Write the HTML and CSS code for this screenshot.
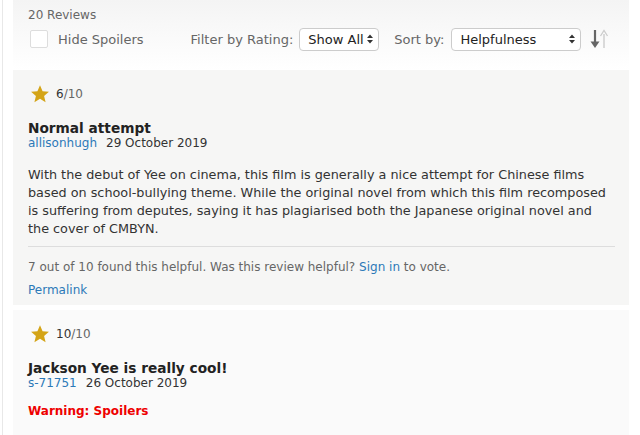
FILE: index.html
```html
<!DOCTYPE html>
<html lang="en">
<head>
    <meta charset="UTF-8">
    <meta name="viewport" content="width=device-width, initial-scale=1.0">
    <title>User Reviews</title>
    <link rel="stylesheet" href="styles.css">
</head>
<body>
    <div class="page">
        <div class="header">
            <div class="count">20 Reviews</div>
            <div class="controls">
                <label class="spoilers"><span class="checkbox"></span>Hide Spoilers</label>
                <span class="label filter-label">Filter by Rating:</span>
                <span class="select select-rating">Show All
                    <svg class="caret" width="6" height="10" viewBox="0 0 6 10"><path d="M0 4L3 0.5 6 4z M0 6L3 9.5 6 6z" fill="#333"/></svg>
                </span>
                <span class="label sort-label">Sort by:</span>
                <span class="select select-sort">Helpfulness
                    <svg class="caret" width="6" height="10" viewBox="0 0 6 10"><path d="M0 4L3 0.5 6 4z M0 6L3 9.5 6 6z" fill="#333"/></svg>
                </span>
                <svg class="sort-arrows" width="20" height="22" viewBox="0 0 20 22">
                    <path d="M6 2v14" stroke="#666" stroke-width="2.2"/>
                    <path d="M1.5 13.5L6 20l4.5-6.5z" fill="#666"/>
                    <path d="M15 20V6" stroke="#ccc" stroke-width="1.4"/>
                    <path d="M11.5 8L15 2.5 18.5 8" stroke="#ccc" stroke-width="1.3" fill="none"/>
                </svg>
            </div>
        </div>

        <div class="review review-odd">
            <div class="rating">
                <svg class="star" width="20" height="20" viewBox="0 0 24 24"><path d="M12 1.5l3.1 7.2 7.6.6-5.8 5 1.8 7.5L12 17.8l-6.7 4 1.8-7.5-5.8-5 7.6-.6z" fill="#d4a417"/></svg>
                <span class="score">6</span><span class="out-of">/10</span>
            </div>
            <div class="title">Normal attempt</div>
            <div class="meta"><a href="#" class="link">allisonhugh</a><span class="date">29 October 2019</span></div>
            <div class="content">
                <p class="text">With the debut of Yee on cinema, this film is generally a nice attempt for Chinese films based on school-bullying theme. While the original novel from which this film recomposed is suffering from deputes, saying it has plagiarised both the Japanese original novel and the cover of CMBYN.</p>
            </div>
            <div class="helpful">7 out of 10 found this helpful. Was this review helpful? <a href="#" class="link">Sign in</a> to vote.</div>
            <a href="#" class="link permalink">Permalink</a>
        </div>

        <div class="review review-even">
            <div class="rating">
                <svg class="star" width="20" height="20" viewBox="0 0 24 24"><path d="M12 1.5l3.1 7.2 7.6.6-5.8 5 1.8 7.5L12 17.8l-6.7 4 1.8-7.5-5.8-5 7.6-.6z" fill="#d4a417"/></svg>
                <span class="score">10</span><span class="out-of">/10</span>
            </div>
            <div class="title">Jackson Yee is really cool!</div>
            <div class="meta"><a href="#" class="link">s-71751</a><span class="date">26 October 2019</span></div>
            <div class="spoiler-warning">Warning: Spoilers</div>
        </div>
    </div>
</body>
</html>
```

FILE: styles.css
```css
* {
    box-sizing: border-box;
    margin: 0;
    padding: 0;
}

body {
    font-family: 'DejaVu Sans', Verdana, sans-serif;
    font-size: 12px;
    color: #333;
    background: #fff;
    overflow: hidden;
}

.page {
    width: 627px;
    margin-left: 2px;
    border-left: 1px solid #e8e8e8;
    padding-left: 10px;
    height: 435px;
}

.header {
    height: 70px;
    padding: 8px 0 0 15px;
    background: linear-gradient(#f4f4f4, #fff);
}

.count {
    color: #666;
    font-size: 12px;
    line-height: 14px;
}

.controls {
    display: flex;
    align-items: center;
    margin-top: 5px;
    height: 24px;
    color: #666;
    font-size: 13px;
}

.spoilers {
    display: flex;
    align-items: center;
}

.checkbox {
    width: 18px;
    height: 18px;
    border: 1px solid #ddd;
    border-radius: 2px;
    background: #fff;
    margin: 0 10px 0 2px;
}

.filter-label {
    margin-left: 47px;
}

.sort-label {
    margin-left: 15px;
}

.select {
    display: flex;
    align-items: center;
    justify-content: space-between;
    height: 23px;
    margin-left: 6px;
    padding: 0 5px 0 8px;
    border: 1px solid #ccc;
    border-radius: 4px;
    background: #fff;
    color: #222;
    font-size: 13px;
}

.select-rating {
    width: 80px;
}

.select-sort {
    width: 130px;
    margin-left: 7px;
}

.caret {
    flex: none;
}

.sort-arrows {
    margin-left: 8px;
}

.review {
    padding: 14px 14px 8px 15px;
}

.review-odd {
    background: #f6f6f5;
    height: 235px;
    margin-bottom: 5px;
}

.review-even {
    background: #fafafa;
    height: 130px;
}

.rating {
    display: flex;
    align-items: center;
    height: 20px;
}

.star {
    margin-left: 2px;
    margin-right: 6px;
}

.score {
    color: #333;
    font-size: 12px;
}

.out-of {
    color: #666;
    font-size: 12px;
}

.title {
    margin-top: 16px;
    font-weight: bold;
    font-size: 13.7px;
    line-height: 16px;
    color: #222;
}

.meta {
    line-height: 15px;
}

.link {
    color: #2c79b8;
    text-decoration: none;
}

.date {
    margin-left: 9px;
}

.content {
    margin-top: 15px;
    padding-bottom: 8px;
    border-bottom: 1px solid #ddd;
}

.text {
    line-height: 18px;
    font-size: 12.8px;
    color: #333;
}

.helpful {
    margin-top: 13px;
    color: #666;
    font-size: 12px;
    line-height: 14px;
}

.permalink {
    display: block;
    margin-top: 8px;
    font-size: 12px;
    line-height: 16px;
}

.spoiler-warning {
    margin-top: 13px;
    color: #e00;
    font-weight: bold;
    font-size: 12px;
}
```
